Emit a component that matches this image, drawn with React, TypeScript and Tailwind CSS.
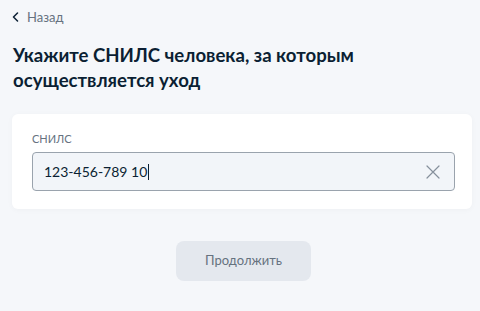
export default function App() {
  return (
    <div
      className="h-[311px] w-[480px] overflow-hidden bg-[#f5f7fa] text-[#0b1f33]"
      style={{ fontFamily: 'Lato, "Noto Sans", sans-serif' }}
    >
      <div className="px-[12px] pt-[9px]">
        {/* Back link */}
        <button className="flex items-center gap-[8px] text-[13px] leading-[16px] text-[#66727f]">
          <svg width="7" height="10" viewBox="0 0 7 10" fill="none">
            <path d="M5.5 1 1.5 5l4 4" stroke="#0b1f33" strokeWidth="1.5" strokeLinecap="round" strokeLinejoin="round" />
          </svg>
          <span>Назад</span>
        </button>

        <h1 className="mt-[18px] pl-[1px] text-[18.6px] font-bold leading-[25px]">
          Укажите СНИЛС человека, за которым
          <br />
          осуществляется уход
        </h1>

        {/* Card */}
        <div className="mt-[21px] w-[460px] rounded-[6px] bg-white pb-[18px] pl-[20px] pr-[17px] pt-[18px] shadow-[0_1px_6px_rgba(0,0,0,0.03)]">
          <div className="text-[11px] leading-[14px] text-[#66727f]">СНИЛС</div>
          <div className="mt-[6px] flex h-[39px] items-center rounded-[4px] border border-[#9aa3ad] bg-[#f2f5f9] pl-[11px] pr-[14px]">
            <div className="flex flex-1 items-center text-[14px] text-[#0b1f33]">
              123-456-789 10
              <span className="ml-[1px] inline-block h-[16px] w-[1px] bg-[#0b1f33]" />
            </div>
            <svg width="14" height="14" viewBox="0 0 14 14" fill="none">
              <path d="M1 1l12 12M13 1 1 13" stroke="#86909c" strokeWidth="1.2" strokeLinecap="round" />
            </svg>
          </div>
        </div>

        {/* Continue */}
        <div className="mt-[32px] flex justify-center">
          <button className="ml-[7px] h-[40px] w-[135px] rounded-[8px] bg-[#e4e8ee] text-[13px] text-[#66727f]">
            Продолжить
          </button>
        </div>
      </div>
    </div>
  );
}
